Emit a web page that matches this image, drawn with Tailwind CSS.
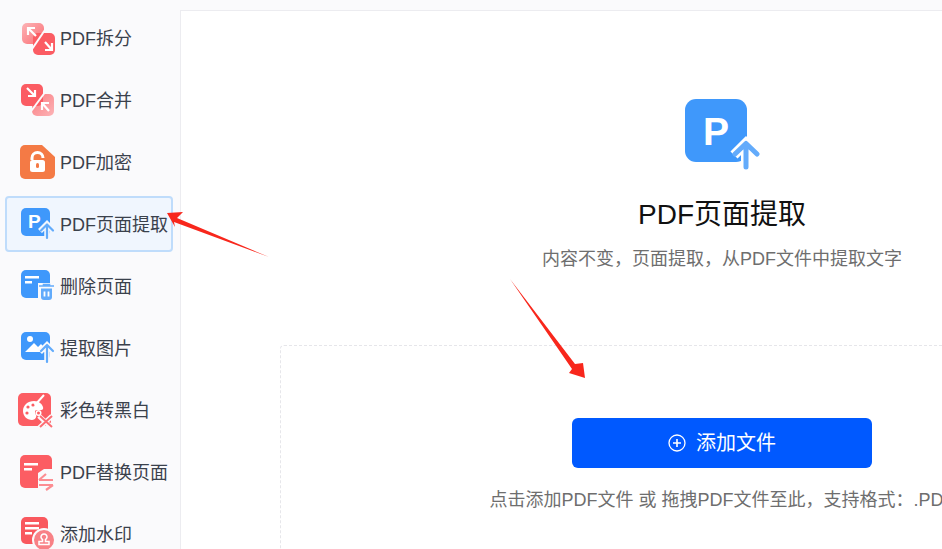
<!DOCTYPE html>
<html lang="zh">
<head>
<meta charset="utf-8">
<script src="https://cdn.jsdelivr.net/npm/@tailwindcss/browser@4"></script>
</head>
<body class="m-0 h-[549px] w-[942px] overflow-hidden bg-[#fafafc] font-['Liberation_Sans','Noto_Sans_CJK_SC',sans-serif] relative">
<div class="flex items-start">
  <aside class="w-[180px] shrink-0 pl-[5px] pr-[7px] pt-[10px] flex flex-col gap-[6px] text-[18px] text-[#3a414c]">
    <div class="h-[56px] shrink-0 flex items-center border-2 border-transparent rounded-[4px]">
      <span class="w-[53px] shrink-0 flex pl-[11px]"><svg width="38" height="38" viewBox="0 0 38 38"><defs><linearGradient id="a" x1="0" y1="0" x2="1" y2="1"><stop offset="0" stop-color="#fcb4b7"/><stop offset="1" stop-color="#fb6d73"/></linearGradient></defs><rect x="4" y="4" width="22" height="21" rx="5" fill="url(#a)"/><rect x="15" y="14" width="22" height="22" rx="5" fill="#fb5c63"/><path d="M29 8L12 33" stroke="#fafafc" stroke-width="2"/><path d="M10 16v-7h7M10 9l8 8M34 24v7h-7M34 31l-7-8" fill="none" stroke="#fff" stroke-width="2.200"/></svg></span>
      <span class="pt-[2px]">PDF拆分</span>
    </div>
    <div class="h-[56px] shrink-0 flex items-center border-2 border-transparent rounded-[4px]">
      <span class="w-[53px] shrink-0 flex pl-[11px]"><svg width="38" height="38" viewBox="0 0 38 38"><defs><linearGradient id="b" x1="0" y1="0" x2="1" y2="1"><stop offset="0" stop-color="#fb7b80"/><stop offset="1" stop-color="#fcb4b7"/></linearGradient></defs><rect x="14" y="13" width="22" height="22" rx="5" fill="url(#b)"/><rect x="3" y="3" width="22" height="22" rx="5" fill="#fb5c63"/><path d="M28 10L11 33" stroke="#fafafc" stroke-width="2"/><path d="M17 9v6h-7M17 15L9 7M24 29v-7h7M24 22l7 8" fill="none" stroke="#fff" stroke-width="2.200"/></svg></span>
      <span class="pt-[2px]">PDF合并</span>
    </div>
    <div class="h-[56px] shrink-0 flex items-center border-2 border-transparent rounded-[4px]">
      <span class="w-[53px] shrink-0 flex pl-[11px]"><svg width="38" height="38" viewBox="0 0 38 38"><path d="M7 2H24L37 14V31a5 5 0 0 1-5 5H7a5 5 0 0 1-5-5V7a5 5 0 0 1 5-5z" fill="#f47a45"/><path d="M14 17v-2a5.500 5.500 0 0 1 11 0" fill="none" stroke="#fff" stroke-width="3"/><rect x="12" y="17" width="15" height="12" rx="2.500" fill="#fff"/><rect x="18" y="20" width="3" height="5" rx="1.500" fill="#f47a45"/></svg></span>
      <span class="pt-[2px]">PDF加密</span>
    </div>
    <div class="h-[56px] shrink-0 flex items-center border-2 border-[#bfdcfb] bg-[#f0f6fe] rounded-[4px]">
      <span class="w-[53px] shrink-0 flex pl-[11px]"><svg width="38" height="38" viewBox="0 0 38 38"><rect x="3" y="3" width="29" height="28" rx="5" fill="#3f98fb"/><text x="10" y="23" font-family="Liberation Sans" font-size="19" font-weight="700" fill="#fff">P</text><path d="M22 26l7-7 7 7M29 19v15" fill="none" stroke="#f0f6fe" stroke-width="5.500"/><path d="M23 25.500l6-6 6 6M29 20v13" fill="none" stroke="#62abfb" stroke-width="2.200" stroke-linecap="round" stroke-linejoin="round"/></svg></span>
      <span class="pt-[2px]">PDF页面提取</span>
    </div>
    <div class="h-[56px] shrink-0 flex items-center border-2 border-transparent rounded-[4px]">
      <span class="w-[53px] shrink-0 flex pl-[11px]"><svg width="38" height="38" viewBox="0 0 38 38"><rect x="3" y="3" width="29" height="28" rx="5" fill="#3f98fb"/><rect x="7" y="9" width="14" height="2.500" fill="#fff"/><rect x="7" y="14" width="7" height="2.500" fill="#fff"/><path d="M20 16h18v18H20z" fill="#fafafc"/><path d="M21 19h15M25.500 19v-1.500h6V19" fill="none" stroke="#62abfb" stroke-width="1.600"/><path d="M23 21.500h11v8.500a3 3 0 0 1-3 3h-5a3 3 0 0 1-3-3z" fill="#62abfb"/><path d="M26.500 24.500v5M30.500 24.500v5" stroke="#fff" stroke-width="1.800"/></svg></span>
      <span class="pt-[2px]">删除页面</span>
    </div>
    <div class="h-[56px] shrink-0 flex items-center border-2 border-transparent rounded-[4px]">
      <span class="w-[53px] shrink-0 flex pl-[11px]"><svg width="38" height="38" viewBox="0 0 38 38"><rect x="3" y="3" width="29" height="28" rx="5" fill="#3f98fb"/><circle cx="12" cy="10" r="3" fill="#fff"/><path d="M7 23l9-9 4 4 3-3 7 8z" fill="#fff"/><path d="M22 23l7-7 7 7M29 16v18" fill="none" stroke="#fafafc" stroke-width="5.500"/><path d="M23 22l6-6 6 6M29 17v16" fill="none" stroke="#62abfb" stroke-width="2.200" stroke-linecap="round" stroke-linejoin="round"/></svg></span>
      <span class="pt-[2px]">提取图片</span>
    </div>
    <div class="h-[56px] shrink-0 flex items-center border-2 border-transparent rounded-[4px]">
      <span class="w-[53px] shrink-0 flex pl-[11px]"><svg width="38" height="38" viewBox="0 0 38 38"><rect x="0" y="2" width="33" height="33" rx="5" fill="#fc5d63"/><path d="M5 20c0-6 5-10 11-10 5 0 8 3 9 6 1 4-3 3-6 3s-2 3-1 5-1 5-4 5c-5 0-9-4-9-9z" fill="#fff"/><circle cx="10" cy="16" r="1.600" fill="#fc5d63"/><circle cx="15" cy="14" r="1.600" fill="#fc5d63"/><circle cx="9" cy="22" r="1.600" fill="#fc5d63"/><circle cx="20.500" cy="22" r="3" fill="#fff"/><circle cx="20.500" cy="22" r="1.500" fill="#fc5d63"/><path d="M17 14L26 4" stroke="#fff" stroke-width="2"/><path d="M21 25l13 12M34 25L21 37" stroke="#fafafc" stroke-width="5"/><path d="M22 25l12 11M34 25L22 36" stroke="#fc6d73" stroke-width="2"/></svg></span>
      <span class="pt-[2px]">彩色转黑白</span>
    </div>
    <div class="h-[56px] shrink-0 flex items-center border-2 border-transparent rounded-[4px]">
      <span class="w-[53px] shrink-0 flex pl-[11px]"><svg width="38" height="38" viewBox="0 0 38 38"><rect x="2" y="2" width="32" height="33" rx="5" fill="#fc5d63"/><rect x="6" y="10" width="14" height="2.500" fill="#fff"/><rect x="6" y="15" width="8" height="2.500" fill="#fff"/><path d="M20 20l6-4 12 0v22H20z" fill="#fafafc"/><path d="M21 27h14M28 21l-7 6M21 32h14M35 32l-7 5" fill="none" stroke="#fc8d92" stroke-width="2.200"/></svg></span>
      <span class="pt-[2px]">PDF替换页面</span>
    </div>
    <div class="h-[56px] shrink-0 flex items-center border-2 border-transparent rounded-[4px]">
      <span class="w-[53px] shrink-0 flex pl-[11px]"><svg width="38" height="38" viewBox="0 0 38 38"><rect x="3" y="2" width="27" height="27" rx="5" fill="#f9585e"/><rect x="7" y="7" width="14" height="2.500" fill="#fff"/><rect x="7" y="12" width="14" height="2.500" fill="#fff"/><rect x="7" y="17" width="7" height="2.500" fill="#fff"/><circle cx="26" cy="25" r="11" fill="#f88186" stroke="#fafafc" stroke-width="2"/><path d="M24.500 24.500a3 3 0 1 1 3 0v2h3.500v3H21v-3h3.500z" fill="none" stroke="#fff" stroke-width="1.500"/></svg></span>
      <span class="pt-[2px]">添加水印</span>
    </div>
  </aside>
  <main class="mt-[10px] w-[1083px] shrink-0 h-[700px] bg-white border-l border-t border-[#ececf0] flex flex-col items-center">
    <svg class="mt-[87px] shrink-0" width="76" height="72" viewBox="0 0 76 72"><rect x="1" y="1" width="62" height="63" rx="11" fill="#3f98fb"/><text x="19" y="47" font-family="Liberation Sans" font-size="39" font-weight="700" fill="#fff">P</text><path d="M50 57L62 45L74 57M62 45V72" fill="none" stroke="#fff" stroke-width="10"/><path d="M51 56L62 45.500L73 56M62 46V69" fill="none" stroke="#63abfb" stroke-width="5" stroke-linecap="round" stroke-linejoin="round"/></svg>
    <h1 class="mt-[23px] h-[44px] shrink-0 leading-[44px] text-[28px] font-normal text-[#111]">PDF页面提取</h1>
    <p class="mt-[7px] h-[30px] shrink-0 leading-[30px] text-[18px] text-[#6e6e6e]">内容不变，页面提取，从PDF文件中提取文字</p>
    <section class="mt-[71px] w-[884px] h-[300px] shrink-0 border border-dashed border-[#e6e6ea] rounded-[4px] flex flex-col items-center">
      <button class="mt-[72px] w-[300px] h-[50px] shrink-0 rounded-[6px] bg-[#0059ff] text-white text-[20px] flex items-center justify-center gap-[10px]">
        <svg width="18" height="18" viewBox="0 0 18 18"><circle cx="9" cy="9" r="8" fill="none" stroke="#fff" stroke-width="1.300"/><path d="M9 5v8M5 9h8" stroke="#fff" stroke-width="1.600"/></svg>
        <span>添加文件</span>
      </button>
      <p class="mt-[17px] h-[30px] shrink-0 leading-[30px] text-[18px] text-[#6e6e6e] whitespace-nowrap">点击添加PDF文件 或 拖拽PDF文件至此，支持格式：.PDF</p>
    </section>
  </main>
</div>
<svg class="absolute left-0 top-0 pointer-events-none" width="942" height="549" viewBox="0 0 942 549">
  <path d="M167 213L183 212L177 218L269 257L174 222L175 227z" fill="#f8271c"/>
  <path d="M510 279L575 364L583 363L585 378L569 373L572 369z" fill="#f8271c"/>
</svg>
</body>
</html>
